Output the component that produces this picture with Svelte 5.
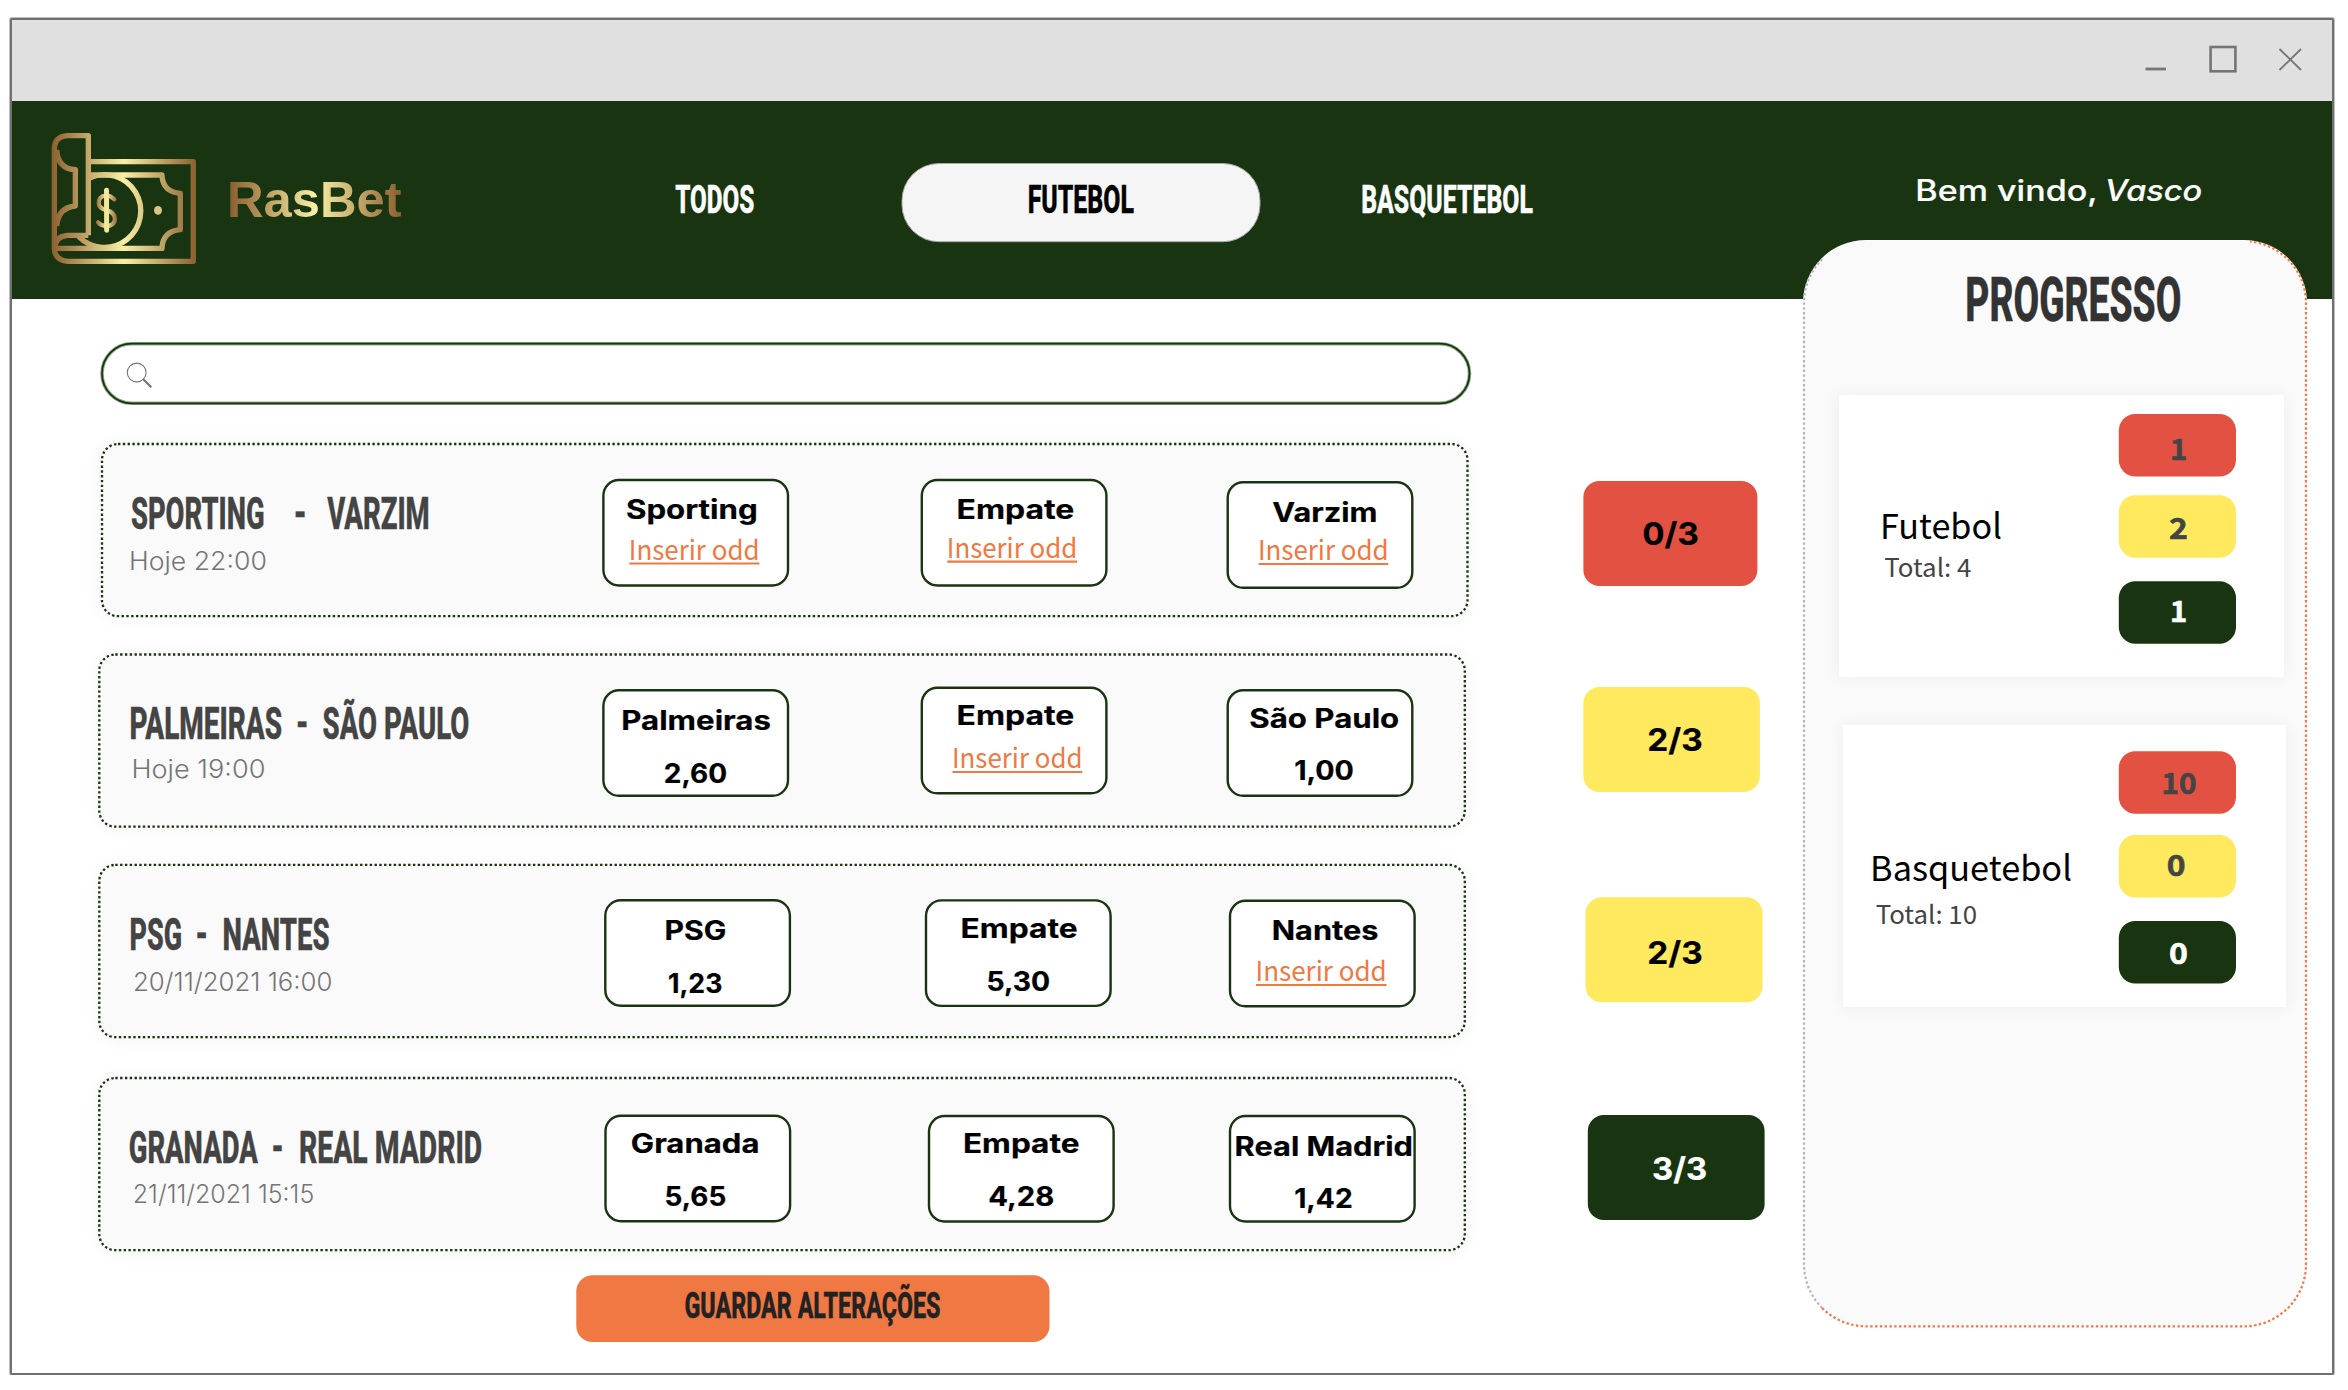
<script>
  // Coordinates inside the drawings are board units: one unit is one pixel of the page.
  const GREEN = '#183410';
  const RED = '#e35143';
  const YELLOW = '#fee95f';

  const tabs = [
    { text: 'TODOS', x: 640, w: 150, x1: 676, x2: 753.5, color: '#fff' },
    { text: 'FUTEBOL', x: 900, w: 362, x1: 1028.5, x2: 1133, color: '#000', active: true },
    { text: 'BASQUETEBOL', x: 1340, w: 214, x1: 1362, x2: 1532, color: '#fff' }
  ];

  const matches = [
    {
      top: 442, left: 102, line: 444,
      title: [['SPORTING', 131.9, 263.6], ['-', 294.7, 305.6], ['VARZIM', 328.2, 428.7]], titleY: 529,
      date: ['Hoje 22:00', 130.5, 265.5, 570],
      odds: [
        { x: 603.4, y: 480, name: ['Sporting', 627.4, 756.3, 519], link: [630.3, 758.6, 559.5] },
        { x: 921.8, y: 480, name: ['Empate', 958, 1072.9, 519], link: [948.3, 1076.3, 557.7] },
        { x: 1227.7, y: 482.3, name: ['Varzim', 1273.8, 1376, 522], link: [1259.5, 1387.5, 560] }
      ],
      status: { x: 1583.4, y: 481, w: 174, fill: RED, color: '#000', text: ['0/3', 1644, 1697, 545] }
    },
    {
      top: 653, left: 99.3, line: 654.5,
      title: [['PALMEIRAS', 130.5, 281], ['-', 297, 307.5], ['SÃO PAULO', 323.5, 468.4]], titleY: 739,
      date: ['Hoje 19:00', 132.9, 264, 778],
      odds: [
        { x: 603.4, y: 690.3, name: ['Palmeiras', 622.7, 769.5, 730], value: ['2,60', 665.2, 725.6, 783] },
        { x: 921.8, y: 687.8, name: ['Empate', 958, 1072.9, 724.5], link: [953.5, 1081.5, 768] },
        { x: 1227.7, y: 690.3, name: ['São Paulo', 1250.8, 1397.8, 727.5], value: ['1,00', 1295.6, 1352.4, 779.5] }
      ],
      status: { x: 1583.4, y: 687, w: 176.5, fill: YELLOW, color: '#000', text: ['2/3', 1649, 1701, 750.5] }
    },
    {
      top: 864, left: 99.3, line: 864.9,
      title: [['PSG', 130.5, 181], ['-', 196.6, 207], ['NANTES', 223.5, 328.7]], titleY: 950,
      date: ['20/11/2021 16:00', 134.3, 331, 991],
      odds: [
        { x: 605.3, y: 900.2, name: ['PSG', 666, 725, 940], value: ['1,23', 669.4, 720.9, 993] },
        { x: 926, y: 900.4, name: ['Empate', 962, 1076.3, 938], value: ['5,30', 988, 1048.8, 991] },
        { x: 1230, y: 900.8, name: ['Nantes', 1273.2, 1377, 940], link: [1257, 1385.7, 981] }
      ],
      status: { x: 1585.5, y: 897.3, w: 177, fill: YELLOW, color: '#000', text: ['2/3', 1649, 1701, 964] }
    },
    {
      top: 1077, left: 99.3, line: 1078,
      title: [['GRANADA', 129.7, 256.7], ['-', 272.6, 282.8], ['REAL MADRID', 300, 481.2]], titleY: 1163,
      date: ['21/11/2021 15:15', 134.2, 312.8, 1203.3],
      odds: [
        { x: 605.5, y: 1115.7, name: ['Granada', 632.3, 758, 1153], value: ['5,65', 666, 724.8, 1206] },
        { x: 929, y: 1116, name: ['Empate', 964.4, 1078, 1153], value: ['4,28', 989.6, 1052.8, 1206] },
        { x: 1230, y: 1116, name: ['Real Madrid', 1236, 1411.6, 1156], value: ['1,42', 1295.6, 1351.3, 1208] }
      ],
      status: { x: 1587.8, y: 1115, w: 176.8, fill: GREEN, color: '#fff', text: ['3/3', 1653.8, 1705.5, 1180] }
    }
  ];
  const oddSlots = [{ x: 600, w: 318 }, { x: 918, w: 306 }, { x: 1224, w: 246 }];

  const sports = [
    {
      x: 1839, y: 395, w: 445,
      name: ['Futebol', 1882, 2000, 539],
      total: ['Total: 4', 1885.5, 1970, 577],
      pills: [
        { y: 414, fill: RED, color: '#444', text: ['1', 2171.7, 2185.8, 460] },
        { y: 495.2, fill: YELLOW, color: '#444', text: ['2', 2170.5, 2186.2, 539] },
        { y: 581.2, fill: GREEN, color: '#fff', text: ['1', 2171.7, 2185.8, 622] }
      ]
    },
    {
      x: 1843, y: 725, w: 443,
      name: ['Basquetebol', 1872, 2070, 881],
      total: ['Total: 10', 1877, 1975.7, 924],
      pills: [
        { y: 751.2, fill: RED, color: '#444', text: ['10', 2163, 2194.9, 794] },
        { y: 835, fill: YELLOW, color: '#444', text: ['0', 2168.4, 2184, 875.5] },
        { y: 921, fill: GREEN, color: '#fff', text: ['0', 2170.5, 2186.2, 964] }
      ]
    }
  ];

  // Share of the font size left free on each side of the letters.
  const bearing = (cls) => (cls === 'cond' ? 0.022 : 0.055);
</script>

{#snippet label(text, x1, x2, y, cls, size, fill)}
  <text class={cls} x={x1 - size * bearing(cls)} {y} textLength={x2 - x1 + 2 * size * bearing(cls)} lengthAdjust="spacingAndGlyphs" font-size={size} {fill} stroke={fill}>{text}</text>
{/snippet}

<div class="window">
  <div class="titlebar">
    <svg width="160" height="40" viewBox="2144 40 160 40" fill="none" stroke="#757575">
      <path d="M2145.5 69H2166" stroke-width="2.8" />
      <rect x="2210.6" y="47" width="24.8" height="24.3" stroke-width="2.6" />
      <path d="M2279.5 49L2301 70M2301 49L2279.5 70" stroke-width="1.8" />
    </svg>
  </div>

  <header>
    <svg class="logo" width="400" height="150" viewBox="90 105 1200 450">
      <defs>
        <linearGradient id="gold" gradientUnits="userSpaceOnUse" x1="155" y1="0" x2="588" y2="0">
          <stop offset="0" stop-color="#8c6030" />
          <stop offset=".5" stop-color="#f9f0a5" />
          <stop offset="1" stop-color="#8c6030" />
        </linearGradient>
        <linearGradient id="goldText" gradientUnits="userSpaceOnUse" x1="690" y1="0" x2="1202" y2="0">
          <stop offset="0" stop-color="#8c6030" />
          <stop offset=".5" stop-color="#f9f0a5" />
          <stop offset="1" stop-color="#8c6030" />
        </linearGradient>
        <linearGradient id="goldSign" gradientUnits="userSpaceOnUse" x1="286" y1="0" x2="352" y2="0">
          <stop offset="0" stop-color="#8c6030" />
          <stop offset=".5" stop-color="#f9f0a5" />
          <stop offset="1" stop-color="#8c6030" />
        </linearGradient>
      </defs>
      <g fill="none" stroke="url(#gold)" stroke-width="16" stroke-linejoin="round">
        <path d="M265 436V137H203Q163 139 163 178V476Q165 511 203 514H580V215H272" />
        <path d="M265 436H203Q166 438 163 476" />
        <path d="M170 180Q174 237 226 239V348Q174 353 170 408" />
        <path d="M272 255H486Q488 306 541 310V419Q488 424 486 475H168" />
        <path d="M268 264A109 109 0 1 1 236 440" />
      </g>
      <g fill="none" stroke="url(#goldSign)" stroke-width="13" stroke-linecap="round">
        <path d="M343 328Q332 317 319 317C302 317 296 328 296 338C296 354 310 358 320 361C336 365 345 372 345 387C345 401 333 408 319 408Q304 408 294 397" />
        <path d="M319.500 301L320 421" stroke="#f3e79c" stroke-width="15" />
      </g>
      <ellipse cx="474" cy="361" rx="12" ry="13" fill="#d9c783" />
      <text class="brand" x="681" y="380" textLength="524" lengthAdjust="spacingAndGlyphs" font-size="152" fill="url(#goldText)">RasBet</text>
    </svg>

    <nav>
      {#each tabs as tab}
        <svg width={tab.w} height="84" viewBox="{tab.x} 160 {tab.w} 84">
          {#if tab.active}
            <rect x="902" y="163.500" width="358" height="78.200" rx="37" fill="#f5f5f5" stroke="#a8a8a8" />
          {/if}
          {@render label(tab.text, tab.x1, tab.x2, 212.8, 'cond', 39.5, tab.color)}
        </svg>
      {/each}
    </nav>

    <svg class="welcome" width="300" height="50" viewBox="1910 165 300 50">
      {@render label('Bem vindo,', 1917, 2096, 200.5, 'medium', 29.3, '#fff')}
      {@render label('Vasco', 2106.5, 2200.5, 200.5, 'medium italic', 29.3, '#fff')}
    </svg>
  </header>

  <main>
    <section class="board">
      <svg class="search" width="1376" height="66" viewBox="98 341 1376 66" fill="none">
        <rect x="102" y="343.700" width="1367.500" height="59.600" rx="29.800" stroke="#8fa889" stroke-width="3.600" />
        <rect x="102" y="343.700" width="1367.500" height="59.600" rx="29.800" stroke={GREEN} stroke-width="1.700" />
        <circle cx="136.700" cy="372.500" r="9.400" stroke="#757575" stroke-width="1.100" />
        <path d="M143 379L151.300 387.200" stroke="#757575" stroke-width="2.200" />
      </svg>

      <div class="matches">
        {#each matches as m}
          <article>
            <div class="card"></div>
            <svg class="outline" width="1376" height="178" viewBox="98 {m.top} 1376 178">
              <rect x={m.left} y={m.line} width="1365.500" height="172.200" rx="16" fill="#fafafa" stroke={GREEN} stroke-width="2.300" stroke-dasharray="2.4 2.4" />
            </svg>
            <svg width="502" height="178" viewBox="98 {m.top} 502 178">
              {#each m.title as [word, x1, x2]}
                {@render label(word, x1, x2, word === '-' ? m.titleY - 1 : m.titleY, 'cond', 45, '#444')}
              {/each}
              {@render label(m.date[0], m.date[1], m.date[2], m.date[3], 'light', 25.5, '#757575')}
            </svg>
            {#each m.odds as o, i}
              <svg width={oddSlots[i].w} height="178" viewBox="{oddSlots[i].x} {m.top} {oddSlots[i].w} 178">
                <rect x={o.x} y={o.y} width="184.600" height="105.500" rx="15.500" fill="#fff" stroke={GREEN} stroke-width="2.400" />
                {@render label(o.name[0], o.name[1], o.name[2], o.name[3], 'bold', 26.5, '#000')}
                {#if o.link}
                  {@render label('Inserir odd', o.link[0], o.link[1] - 0.5, o.link[2], 'cjk', 26.5, '#f07842')}
                  <path d="M{o.link[0] - 1} {o.link[2] + 4}H{o.link[1] + 0.8}" stroke="#f07842" stroke-width="2.200" />
                {:else}
                  {@render label(o.value[0], o.value[1], o.value[2], o.value[3], 'bold', 26.5, '#000')}
                {/if}
              </svg>
            {/each}
            <svg class="status" width="190" height="178" viewBox="1580 {m.top} 190 178">
              <rect x={m.status.x} y={m.status.y} width={m.status.w} height="105" rx="16" fill={m.status.fill} />
              {@render label(m.status.text[0], m.status.text[1], m.status.text[2], m.status.text[3], 'bold', 31.5, m.status.color)}
            </svg>
          </article>
        {/each}
      </div>

      <svg class="save" width="476" height="70" viewBox="575 1274 476 70">
        <rect x="576.300" y="1275.300" width="473.200" height="66.700" rx="16" fill="#f07842" />
        {@render label('GUARDAR ALTERAÇÕES', 685.2, 939.7, 1317.8, 'cond', 37.5, '#222')}
      </svg>
    </section>

    <aside>
      <svg class="outline" width="506" height="1090" viewBox="1802 239 506 1090" fill="none" stroke-width="2.200" stroke-dasharray="2.4 2.4">
        <rect x="1803" y="240" width="504" height="1087" rx="63" fill="#fafafa" stroke="none" />
        <path d="M1822.200 259.200A62 62 0 0 0 1804 303V1264.300A62 62 0 0 0 1822.200 1308.100" stroke="#b5b5b5" />
        <path d="M1822.200 1308.100A62 62 0 0 0 1866 1326.300H2244A62 62 0 0 0 2306 1264.300V303A62 62 0 0 0 2250 241.500" stroke="#f07842" />
      </svg>
      <svg class="heading" width="240" height="60" viewBox="1955 270 240 60">
        {@render label('PROGRESSO', 1966.6, 2180, 320.5, 'cond', 60.5, '#333')}
      </svg>
      {#each sports as s, i}
        <div class="sport" class:second={i === 1}>
          <svg width={s.w} height="282" viewBox="{s.x} {s.y} {s.w} 282">
            {@render label(s.name[0], s.name[1], s.name[2], s.name[3], 'cjk', 34.5, '#000')}
            {@render label(s.total[0], s.total[1], s.total[2], s.total[3], 'cjk', 25, '#444')}
            {#each s.pills as p}
              <rect x="2118.800" y={p.y} width="117.200" height="62.500" rx="16.500" fill={p.fill} />
              {@render label(p.text[0], p.text[1], p.text[2], p.text[3], 'cjk strong', 29, p.color)}
            {/each}
          </svg>
        </div>
      {/each}
    </aside>
  </main>
</div>

<style>
  :global(body) {
    background: #fff;
    overflow: hidden;
  }
  svg {
    display: block;
    flex: none;
    overflow: visible;
  }
  text {
    stroke-width: 0;
  }
  .window {
    box-sizing: border-box;
    width: 2324px;
    height: 1357px;
    margin: 18px 0 0 10px;
    border: 2px solid #707070;
    border-radius: 2px;
    box-shadow: 0 0 0 1px #bdbdbd;
    background: #fff;
  }
  .titlebar {
    display: flex;
    justify-content: flex-end;
    box-sizing: border-box;
    height: 81px;
    padding: 20px 28px 0 0;
    background: #e0e0e0;
  }
  header {
    display: flex;
    align-items: flex-start;
    height: 198px;
    background: #183410;
  }
  .logo {
    margin: 24px 0 0 18px;
  }
  nav {
    display: flex;
    margin: 59px 0 0 210px;
  }
  nav svg:nth-child(2) {
    margin: 0 78px 0 110px;
  }
  .welcome {
    margin: 64px 0 0 356px;
  }
  main {
    display: flex;
    align-items: flex-start;
  }
  .board {
    width: 1790px;
    flex: none;
  }
  .search {
    margin: 42px 0 0 86px;
  }
  .matches {
    display: grid;
    grid-template-rows: 211px 211px 213px 178px;
    margin: 35px 0 0 86px;
  }
  article {
    position: relative;
    display: flex;
    height: 178px;
  }
  .card {
    position: absolute;
    left: 3px;
    top: 3px;
    width: 1364px;
    height: 171px;
    border-radius: 16px;
    box-shadow: 0 0 20px rgba(0, 0, 0, 0.06);
  }
  .outline {
    position: absolute;
    left: 0;
    top: 0;
  }
  article svg:not(.outline) {
    position: relative;
  }
  .status {
    margin-left: 110px;
  }
  .save {
    margin: 19px 0 0 563px;
  }
  aside {
    position: relative;
    width: 506px;
    height: 1090px;
    margin-top: -60px;
    flex: none;
  }
  .heading {
    position: relative;
    margin: 31px 0 0 153px;
  }
  .sport {
    position: relative;
    width: 445px;
    height: 282px;
    margin: 65px 0 0 37px;
    background: #fff;
    box-shadow: 0 0 16px rgba(0, 0, 0, 0.06);
  }
  .second {
    width: 443px;
    margin: 48px 0 0 41px;
  }
  .cond {
    font-family: Roboto, 'Liberation Sans', sans-serif;
    font-weight: 800;
    stroke-width: 0.4px;
  }
  .bold {
    font-family: Inter, 'Liberation Sans', sans-serif;
    font-weight: 700;
    stroke-width: 0.2px;
  }
  .medium {
    font-family: Inter, 'Liberation Sans', sans-serif;
    font-weight: 500;
    stroke-width: 0.2px;
  }
  .italic {
    font-style: italic;
  }
  .light {
    font-family: Inter, 'Liberation Sans', sans-serif;
    font-weight: 300;
  }
  .cjk {
    font-family: 'Noto Sans CJK SC', 'Noto Sans', sans-serif;
    font-weight: 400;
  }
  .strong {
    font-weight: 700;
    stroke-width: 0.6px;
  }
  .brand {
    font-family: 'Liberation Sans', sans-serif;
    font-weight: 700;
  }
</style>
